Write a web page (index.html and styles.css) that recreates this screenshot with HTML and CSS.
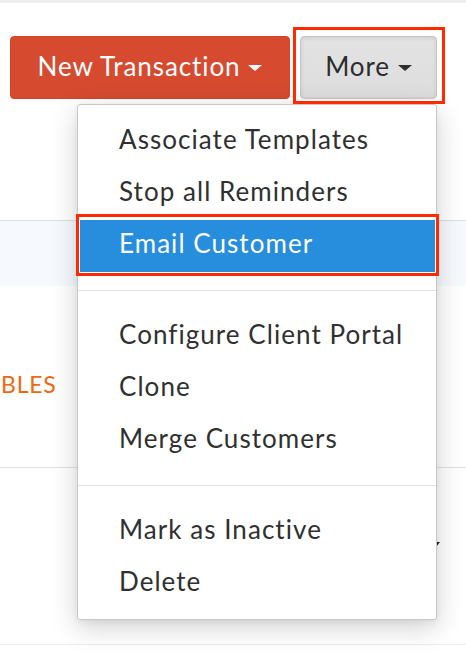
FILE: index.html
```html
<!DOCTYPE html>
<html>
<head>
<meta charset="utf-8">
<link rel="stylesheet" href="styles.css">
</head>
<body>
<div class="page">
  <div class="topstrip"></div>
  <div class="header">
    <div class="toolbar">
      <button class="btn btn-primary">New Transaction <span class="caret caret-white"></span></button>
      <button class="btn btn-default">More <span class="caret caret-dark"></span><span class="mark mark-btn"></span></button>
    </div>
  </div>
  <div class="band"></div>
  <div class="row row-mid"><span class="orange">BLES</span></div>
  <div class="row row-low"><span class="small-caret"></span></div>

  <div class="menu">
    <div class="item">Associate Templates</div>
    <div class="item">Stop all Reminders</div>
    <div class="item item-active">Email Customer<span class="mark mark-item"></span></div>
    <div class="sep"></div>
    <div class="item">Configure Client Portal</div>
    <div class="item">Clone</div>
    <div class="item">Merge Customers</div>
    <div class="sep"></div>
    <div class="item">Mark as Inactive</div>
    <div class="item">Delete</div>
  </div>
</div>
</body>
</html>
```
FILE: styles.css
```css
* { box-sizing: border-box; }
html, body { margin: 0; padding: 0; background: #fff; }
body { font-family: Lato, "Open Sans", sans-serif; color: #333; width: 466px; height: 662px; overflow: hidden; }
.page { position: relative; width: 466px; height: 662px; }
.topstrip { height: 3px; background: #eeeeee; }
.header { height: 218px; border-bottom: 1px solid #dedede; }
.toolbar { display: flex; gap: 10px; padding: 33px 0 0 10px; }
.btn {
  position: relative;
  display: flex; align-items: center; justify-content: center; gap: 8px;
  height: 63px; border-radius: 4px; font-family: inherit; font-size: 26px;
  letter-spacing: 0.9px;
  padding: 0 0 3px; margin: 0; cursor: pointer;
}
.btn-primary { width: 280px; background: #d64a30; color: #fff; border: 1px solid #d04529; }
.btn-default {
  width: 137px; color: #2d2d2d; border: 1px solid #c4c4c4;
  background: linear-gradient(#e3e3e3, #dddddd);
  box-shadow: inset 0 1px 4px rgba(0,0,0,0.10);
}
.caret { display: inline-block; width: 0; height: 0; border-left: 7px solid transparent; border-right: 7px solid transparent; border-top: 6px solid; margin-top: 4px; }
.caret-white { border-top-color: #fff; }
.caret-dark { border-top-color: #2d2d2d; }
.mark { position: absolute; border: 3px solid #ff2a00; pointer-events: none; }
.mark-btn { top: -10px; left: -8px; right: -9px; bottom: -6px; z-index: 5; }
.band { height: 65px; background: #f6f9fd; }
.row { position: relative; }
.row-mid { height: 182px; border-bottom: 1px solid #e0e0e0; padding-top: 84px; }
.orange { color: #f0670f; font-size: 23px; letter-spacing: 0.8px; padding-left: 1px; }
.row-low { height: 177px; border-bottom: 1px solid #ededed; padding: 74px 0 0 432px; }
.small-caret { display: block; width: 0; height: 0; border-left: 4px solid transparent; border-right: 4px solid transparent; border-top: 5px solid #222; }
.menu {
  position: absolute; top: 104px; left: 77px; width: 360px;
  background: #fff; border: 1px solid #c8c8c8; border-radius: 3px;
  padding: 11px 0 9px;
  box-shadow: 0 8px 28px rgba(0,0,0,0.18), 0 2px 6px rgba(0,0,0,0.06);
  z-index: 3;
}
.item { position: relative; height: 52px; line-height: 46px; padding: 0 0 6px 39px; margin: 0 2px; font-size: 26px; letter-spacing: 1.05px; color: #303030; white-space: nowrap; }
.item-active { background: #278ddd; color: #fff; margin-right: 1px; }
.mark-item { top: -6px; left: -4px; right: -4px; bottom: -4px; }
.sep { height: 1px; background: #e2e2e2; margin: 18px 0 20px; }
```
